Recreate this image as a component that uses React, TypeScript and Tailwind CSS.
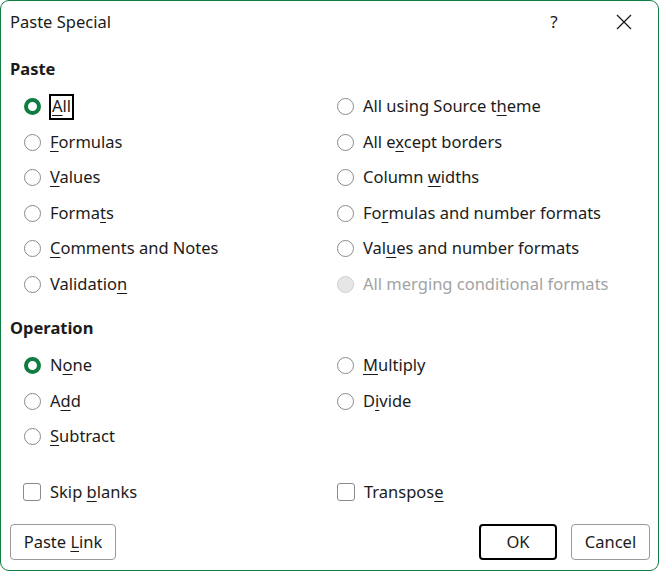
import React from "react";

const font = "font-['Noto_Sans','Open_Sans',sans-serif]";

type Opt = { pre: string; key: string; post: string; checked?: boolean; disabled?: boolean; focus?: boolean };

const Label = ({ o }: { o: Opt }) => (
  <span>
    {o.pre}
    {o.key && <span className="underline underline-offset-[3px] decoration-1">{o.key}</span>}
    {o.post}
  </span>
);

const Radio = ({ o }: { o: Opt }) => (
  <div className={`flex items-center h-[35.5px] ${o.disabled ? "text-[#a3a3a3]" : "text-[#1b1b1b]"}`}>
    {o.checked ? (
      <span className="w-[17px] h-[17px] rounded-full border-[4.5px] border-[#107c41] bg-white shrink-0" />
    ) : o.disabled ? (
      <span className="w-[17px] h-[17px] rounded-full border border-[#cfcfcf] bg-[#e6e6e6] shrink-0" />
    ) : (
      <span className="w-[17px] h-[17px] rounded-full border-[1.5px] border-[#8a8a8a] bg-white shrink-0" />
    )}
    {o.focus ? (
      <span className="ml-[8px] h-[26px] flex items-center border-2 border-black px-[1px]">
        <Label o={o} />
      </span>
    ) : (
      <span className="ml-[9px]">
        <Label o={o} />
      </span>
    )}
  </div>
);

const Check = ({ o }: { o: Opt }) => (
  <div className="flex items-center h-[35.5px] text-[#1b1b1b]">
    <span className="w-[18px] h-[18px] rounded-[3px] border-[1.5px] border-[#8a8a8a] bg-white shrink-0" />
    <span className="ml-[9px]">
      <Label o={o} />
    </span>
  </div>
);

const pasteLeft: Opt[] = [
  { pre: "", key: "A", post: "ll", checked: true, focus: true },
  { pre: "", key: "F", post: "ormulas" },
  { pre: "", key: "V", post: "alues" },
  { pre: "Forma", key: "t", post: "s" },
  { pre: "", key: "C", post: "omments and Notes" },
  { pre: "Validatio", key: "n", post: "" },
];

const pasteRight: Opt[] = [
  { pre: "All using Source t", key: "h", post: "eme" },
  { pre: "All e", key: "x", post: "cept borders" },
  { pre: "Column ", key: "w", post: "idths" },
  { pre: "Fo", key: "r", post: "mulas and number formats" },
  { pre: "Val", key: "u", post: "es and number formats" },
  { pre: "All merging conditional formats", key: "", post: "", disabled: true },
];

const opLeft: Opt[] = [
  { pre: "N", key: "o", post: "ne", checked: true },
  { pre: "A", key: "d", post: "d" },
  { pre: "", key: "S", post: "ubtract" },
];

const opRight: Opt[] = [
  { pre: "", key: "M", post: "ultiply" },
  { pre: "D", key: "i", post: "vide" },
];

export default function App() {
  return (
    <div className={`${font} w-[659px] h-[571px] bg-white border border-[#107c41] rounded-[9px] flex flex-col text-[16.5px] text-[#1b1b1b] overflow-hidden`}>
      <div className="h-[42px] shrink-0 flex items-center pl-[9px]">
        <span className="flex-1">Paste Special</span>
        <span className="w-[20px] text-center mr-[52px] text-[17px]">?</span>
        <svg width="16" height="16" viewBox="0 0 16 16" className="mr-[26px]">
          <path d="M1 1L15 15M15 1L1 15" stroke="#1b1b1b" strokeWidth="1.3" />
        </svg>
      </div>

      <div className="mt-[14px] h-[24px] flex items-center pl-[9px] font-bold">Paste</div>
      <div className="mt-[8px] grid grid-cols-[313px_1fr] pl-[23px]">
        <div>
          {pasteLeft.map((o, i) => (
            <Radio key={i} o={o} />
          ))}
        </div>
        <div>
          {pasteRight.map((o, i) => (
            <Radio key={i} o={o} />
          ))}
        </div>
      </div>

      <div className="mt-[14px] h-[24px] flex items-center pl-[9px] font-bold">Operation</div>
      <div className="mt-[8px] grid grid-cols-[313px_1fr] pl-[23px]">
        <div>
          {opLeft.map((o, i) => (
            <Radio key={i} o={o} />
          ))}
        </div>
        <div>
          {opRight.map((o, i) => (
            <Radio key={i} o={o} />
          ))}
        </div>
      </div>

      <div className="mt-[20px] grid grid-cols-[314px_1fr] pl-[22px]">
        <Check o={{ pre: "Skip ", key: "b", post: "lanks" }} />
        <Check o={{ pre: "Transpos", key: "e", post: "" }} />
      </div>

      <div className="mt-[14px] flex items-center pl-[9px] pr-[8px]">
        <button className="h-[36px] w-[106px] border border-[#9a9a9a] rounded-[4px] bg-white">
          Paste <span className="underline underline-offset-[3px] decoration-1">L</span>ink
        </button>
        <div className="flex-1" />
        <button className="h-[36px] w-[78px] border-2 border-black rounded-[4px] bg-white">OK</button>
        <button className="ml-[14px] h-[36px] w-[79px] border border-[#9a9a9a] rounded-[4px] bg-white">Cancel</button>
      </div>
    </div>
  );
}
